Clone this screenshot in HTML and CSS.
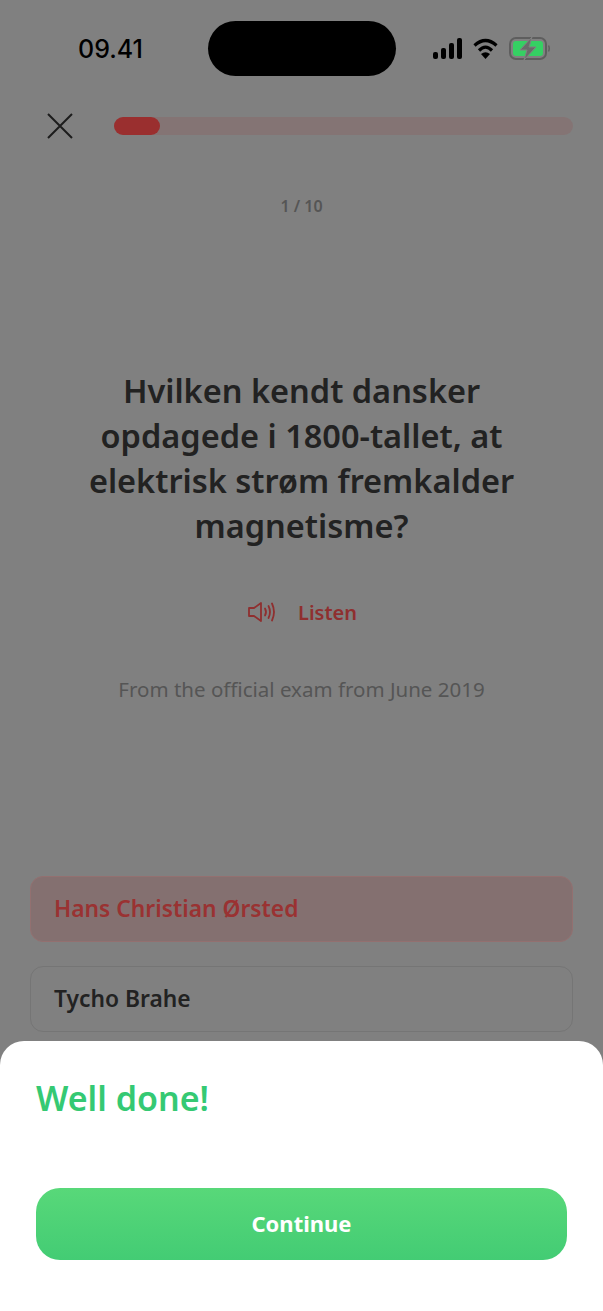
FILE: index.html
```html
<!DOCTYPE html>
<html lang="en">
<head>
    <meta charset="UTF-8">
    <meta name="viewport" content="width=device-width, initial-scale=1.0">
    <title>Quiz</title>
    <link rel="stylesheet" href="styles.css">
</head>
<body>
    <div class="screen">
        <div class="status-bar">
            <span class="time">09.41</span>
            <div class="island"></div>
            <div class="status-icons">
                <svg width="29" height="21" viewBox="0 0 29 21" fill="#000">
                    <rect x="0" y="14" width="5" height="7" rx="2"/>
                    <rect x="8" y="10" width="5" height="11" rx="2"/>
                    <rect x="16" y="5" width="5" height="16" rx="2"/>
                    <rect x="24" y="0" width="5" height="21" rx="2"/>
                </svg>
                <svg width="25" height="21" viewBox="0 0 25 21" fill="none" stroke="#000" stroke-width="3.200">
                    <path d="M1.500 7.500 Q12.500 -2.500 23.500 7.500"/>
                    <path d="M6 12.500 Q12.500 6 19 12.500"/>
                    <path d="M12.500 21 L8 16 Q12.500 12.500 17 16 Z" fill="#000" stroke="none"/>
                </svg>
                <svg width="41" height="23" viewBox="0 0 41 23">
                    <rect x="1" y="1" width="36" height="21" rx="6" fill="none" stroke="#5e5e5e" stroke-width="2"/>
                    <rect x="4" y="4" width="30" height="15" rx="3" fill="#35d063"/>
                    <path d="M39.500 8.500 Q41 11.500 39.500 14.500" fill="none" stroke="#5e5e5e" stroke-width="1.500"/>
                    <path d="M23 0 L11 13 H18 L15 23 L27 10 H20 Z" fill="#6a6a6a" stroke="#808080" stroke-width="1"/>
                </svg>
            </div>
        </div>

        <div class="top-row">
            <button class="close-btn">
                <svg width="26" height="26" viewBox="0 0 26 26" fill="none" stroke="#1c1c1c" stroke-width="2">
                    <path d="M1 1 L25 25 M25 1 L1 25"/>
                </svg>
            </button>
            <div class="progress">
                <div class="progress-fill"></div>
            </div>
        </div>

        <p class="counter">1 / 10</p>

        <h1 class="question">Hvilken kendt dansker opdagede i 1800-tallet, at elektrisk strøm fremkalder magnetisme?</h1>

        <div class="listen">
            <svg width="28" height="22" viewBox="0 0 28 22" fill="none" stroke="#8f2f2f" stroke-width="1.800" stroke-linejoin="round" stroke-linecap="round">
                <path d="M1 7 H6 L13 2 V20 L6 15 H1 Z"/>
                <path d="M17 7.500 Q19 11 17 14.500"/>
                <path d="M20.500 5 Q23.500 11 20.500 17"/>
                <path d="M24 2.500 Q28 11 24 19.500"/>
            </svg>
            <span>Listen</span>
        </div>

        <p class="source">From the official exam from June 2019</p>

        <div class="options">
            <div class="option correct">Hans Christian Ørsted</div>
            <div class="option">Tycho Brahe</div>
        </div>
    </div>

    <div class="sheet">
        <h2>Well done!</h2>
        <button class="continue-btn">Continue</button>
    </div>
</body>
</html>
```

FILE: styles.css
```css
html, body {
    height: 100%;
}

body {
    font-family: "Noto Sans", Arial, sans-serif;
    margin: 0;
    background-color: #808080;
    overflow: hidden;
    position: relative;
}

.screen {
    display: flex;
    flex-direction: column;
    padding: 21px 30px 0;
}

.status-bar {
    display: flex;
    align-items: center;
    height: 55px;
}

.time {
    font-family: Inter, sans-serif;
    font-size: 25px;
    font-weight: 500;
    color: #000;
    width: 178px;
    padding-left: 48px;
    box-sizing: border-box;
    margin-top: 1px;
}

.island {
    width: 188px;
    height: 55px;
    border-radius: 28px;
    background-color: #000;
}

.status-icons {
    display: flex;
    align-items: center;
    gap: 11px;
    margin-left: 37px;
    margin-top: -1px;
    flex-shrink: 0;
}

.top-row {
    display: flex;
    align-items: center;
    margin-top: 37px;
    height: 26px;
}

.close-btn {
    display: flex;
    padding: 0;
    margin-left: 17px;
    border: none;
    background: none;
}

.progress {
    width: 459px;
    height: 18px;
    margin-left: 41px;
    border-radius: 9px;
    background-color: #847474;
}

.progress-fill {
    width: 46px;
    height: 18px;
    border-radius: 9px;
    background-color: #9a2f2f;
}

.counter {
    margin: 57px 0 0;
    text-align: center;
    font-size: 16px;
    line-height: 20px;
    font-weight: 600;
    color: #555;
}

.question {
    margin: 152px 0 0;
    padding: 0 20px;
    text-align: center;
    font-size: 32.500px;
    line-height: 45px;
    font-weight: 600;
    color: #222;
}

.listen {
    display: flex;
    justify-content: center;
    align-items: center;
    gap: 22px;
    margin-top: 50px;
    height: 28px;
    padding: 0 0 2px 2px;
    font-size: 20px;
    font-weight: 600;
    color: #8f2f2f;
}

.source {
    margin: 47px 0 0;
    text-align: center;
    font-size: 20.500px;
    line-height: 28px;
    color: #555;
}

.options {
    display: flex;
    flex-direction: column;
    gap: 24px;
    margin-top: 173px;
}

.option {
    display: flex;
    align-items: center;
    height: 66px;
    box-sizing: border-box;
    padding: 0 0 1px 23px;
    border: 1px solid #757575;
    border-radius: 13px;
    font-size: 22.800px;
    font-weight: 600;
    color: #222;
}

.option.correct {
    background-color: #847070;
    border-color: #937070;
    color: #9a3232;
}

.sheet {
    position: absolute;
    left: 0;
    right: 0;
    bottom: 0;
    height: 270px;
    box-sizing: border-box;
    padding: 35px 36px 0;
    background-color: #fff;
    border-radius: 24px 24px 0 0;
}

.sheet h2 {
    margin: 0;
    font-size: 34px;
    line-height: 44px;
    font-weight: 600;
    color: #35c973;
}

.continue-btn {
    display: block;
    width: 531px;
    height: 72px;
    margin-top: 68px;
    padding-bottom: 4px;
    border: none;
    border-radius: 24px;
    background: linear-gradient(180deg, #58d879, #43cc74);
    color: #fff;
    font-family: inherit;
    font-size: 22px;
    font-weight: 700;
}
```
